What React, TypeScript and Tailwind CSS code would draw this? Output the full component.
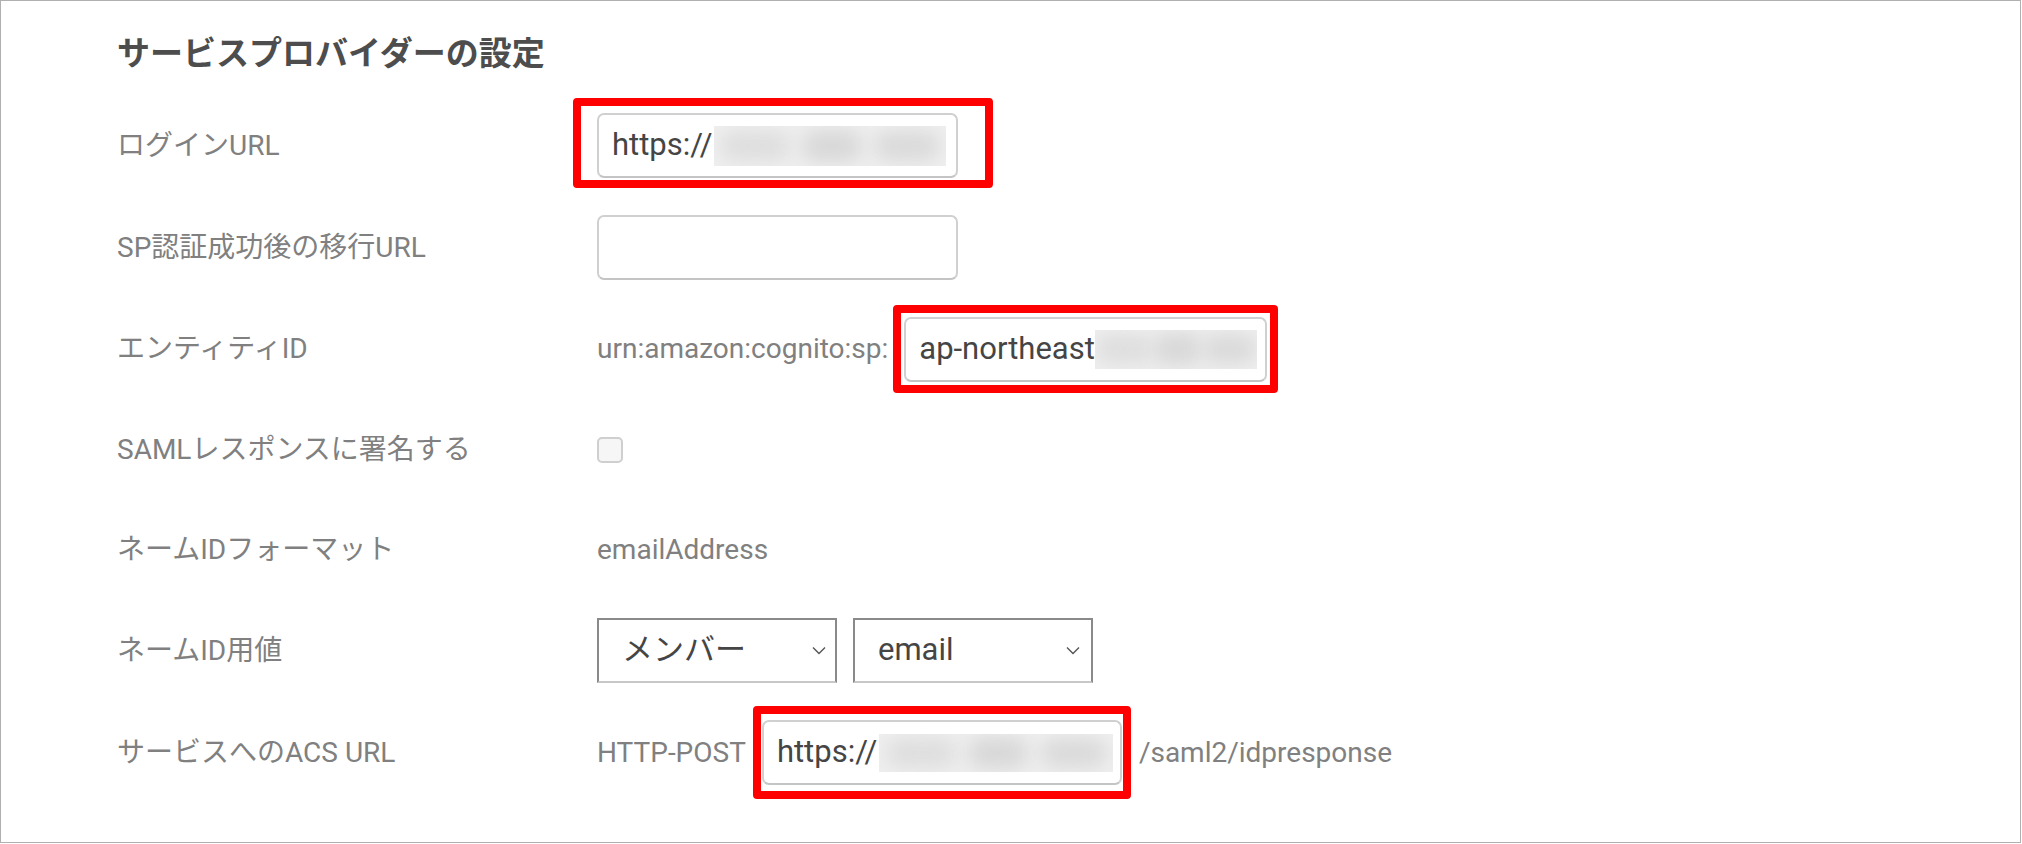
import React from "react";

const font = "font-['Roboto','Noto_Sans_CJK_JP',sans-serif]";

// blurred-out (masked) part of a URL
const Masked = ({ className }: { className: string }) => (
  <div className={`relative overflow-hidden bg-[#efefef] ${className}`}>
    <div className="absolute inset-0 flex items-center justify-around">
      <span className="h-[30px] w-[70px] rounded-full bg-[#dedede] blur-[9px]" />
      <span className="h-[32px] w-[60px] rounded-full bg-[#d8d8d8] blur-[9px]" />
      <span className="h-[30px] w-[66px] rounded-full bg-[#dadada] blur-[9px]" />
    </div>
  </div>
);

const TextBox = ({
  w,
  children,
  mark,
}: {
  w: string;
  children?: React.ReactNode;
  mark?: string;
}) => (
  <div className="relative">
    <div
      className={`flex h-[65px] items-center rounded-[7px] border-2 border-[#d0d0d0] border-b-[#c4c4c4] bg-white pl-[13px] text-[31px] text-[#454545] ${w}`}
    >
      {children}
    </div>
    {mark ? (
      <div className={`pointer-events-none absolute rounded-[4px] border-8 border-[#ff0000] ${mark}`} />
    ) : null}
  </div>
);

const Chevron = () => (
  <svg width="14" height="9" viewBox="0 0 14 9" fill="none">
    <path d="M1 1.5L7 7.5L13 1.5" stroke="#555" strokeWidth="1.4" />
  </svg>
);

const FakeSelect = ({ w, label, chev }: { w: string; label: string; chev: string }) => (
  <div
    className={`flex h-[65px] items-center justify-between border-2 border-[#8a8a8a] border-b-[#c8c8c8] bg-white pl-[23px] text-[31px] text-[#454545] ${w}`}
  >
    <span>{label}</span>
    <span className={chev}>
      <Chevron />
    </span>
  </div>
);

const Row = ({
  label,
  h,
  children,
}: {
  label: string;
  h: string;
  children: React.ReactNode;
}) => (
  <div className={`flex items-center ${h}`}>
    <div className="w-[480px] text-[28px] text-[#808080]">{label}</div>
    <div className="flex items-center">{children}</div>
  </div>
);

export default function App() {
  return (
    <div className={`h-[843px] w-[2021px] overflow-hidden border border-[#b0b0b0] bg-white ${font}`}>
      <div className="pl-[116px]">
        <h2 className="pt-[36px] text-[33px] leading-[33px] font-bold text-[#4d4d4d]">
          サービスプロバイダーの設定
        </h2>

        <div className="mt-[25px]">
          <Row label="ログインURL" h="h-[101px]">
            <TextBox w="w-[361px]" mark="-left-[24px] -top-[15px] -right-[35px] -bottom-[10px]">
              <span>https://</span>
              <Masked className="ml-[2px] h-[40px] w-[232px]" />
            </TextBox>
          </Row>

          <Row label="SP認証成功後の移行URL" h="h-[103px]">
            <TextBox w="w-[361px]" />
          </Row>

          <Row label="エンティティID" h="h-[100px]">
            <span className="text-[28px] text-[#808080]">urn:amazon:cognito:sp:</span>
            <div className="ml-[16px]">
              <TextBox w="w-[363px]" mark="-left-[11px] -top-[12px] -right-[11px] -bottom-[11px]">
                <span>ap-northeast</span>
                <Masked className="h-[39px] w-[162px]" />
              </TextBox>
            </div>
          </Row>

          <Row label="SAMLレスポンスに署名する" h="h-[101px]">
            <div className="h-[26px] w-[26px] rounded-[5px] border-2 border-[#cfcfcf] bg-[#f6f6f6]" />
          </Row>

          <Row label="ネームIDフォーマット" h="h-[100px]">
            <span className="text-[28px] text-[#808080]">emailAddress</span>
          </Row>

          <Row label="ネームID用値" h="h-[101px]">
            <div className="flex gap-[16px]">
              <FakeSelect w="w-[240px]" label="メンバー" chev="mr-[9px]" />
              <FakeSelect w="w-[240px]" label="email" chev="mr-[11px]" />
            </div>
          </Row>

          <Row label="サービスへのACS URL" h="h-[103px]">
            <span className="text-[28px] text-[#808080]">HTTP-POST</span>
            <div className="ml-[16px]">
              <TextBox w="w-[360px]" mark="-left-[9px] -top-[14px] -right-[9px] -bottom-[14px]">
                <span>https://</span>
                <Masked className="ml-[2px] h-[38px] w-[234px]" />
              </TextBox>
            </div>
            <span className="ml-[17px] text-[28px] text-[#808080]">/saml2/idpresponse</span>
          </Row>
        </div>
      </div>
    </div>
  );
}
